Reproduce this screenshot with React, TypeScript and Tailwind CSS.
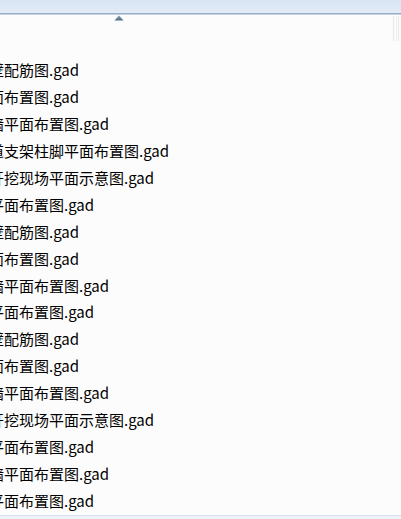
import React from "react";

const visible = [
  "壁配筋图.gad",
  "面布置图.gad",
  "墙平面布置图.gad",
  "道支架柱脚平面布置图.gad",
  "开挖现场平面示意图.gad",
  "平面布置图.gad",
  "壁配筋图.gad",
  "面布置图.gad",
  "墙平面布置图.gad",
  "平面布置图.gad",
  "壁配筋图.gad",
  "面布置图.gad",
  "墙平面布置图.gad",
  "开挖现场平面示意图.gad",
  "平面布置图.gad",
  "墙平面布置图.gad",
  "平面布置图.gad",
];

export default function App() {
  return (
    <div className="w-[401px] h-[519px] overflow-hidden bg-[#fcfcfc] flex flex-col relative">
      <div className="h-[13px] bg-gradient-to-b from-[#d9e5f4] to-[#e2ebf7] shrink-0" />
      <div className="h-px bg-[#9aadc2] shrink-0" />
      <div className="h-px bg-[#c3d1e0] shrink-0" />
      <svg
        className="absolute left-[114px] top-[15px]"
        width="10"
        height="6"
        viewBox="0 0 10 6"
      >
        <defs>
          <linearGradient id="ar" x1="0" y1="0" x2="0" y2="1">
            <stop offset="0" stopColor="#8aa2b8" />
            <stop offset="1" stopColor="#4f6a84" />
          </linearGradient>
        </defs>
        <polygon points="5,0.5 9.5,5.5 0.5,5.5" fill="url(#ar)" />
      </svg>
      <div className="absolute right-[2px] top-[16px] h-[25px] w-[6px] flex gap-[2px] opacity-60">
        <div className="w-px h-full bg-[#d8d8d8]" />
        <div className="w-px h-full bg-[#e6e6e6]" />
        <div className="w-px h-full bg-[#e0e0e0]" />
      </div>
      <div
        className="flex-1 flex flex-col pt-[42px] ml-[-11px] text-[15px] leading-[27px] text-black whitespace-nowrap"
        style={{ fontFamily: '"Noto Sans CJK SC", "Noto Sans", sans-serif' }}
      >
        {visible.map((r, i) => (
          <div key={i} className="h-[26.95px] leading-[26.95px]">
            {r}
          </div>
        ))}
      </div>
      <div className="h-px bg-[#d6e1ee] shrink-0" />
      <div className="h-[4px] bg-[#eef3fa] shrink-0" />
    </div>
  );
}
